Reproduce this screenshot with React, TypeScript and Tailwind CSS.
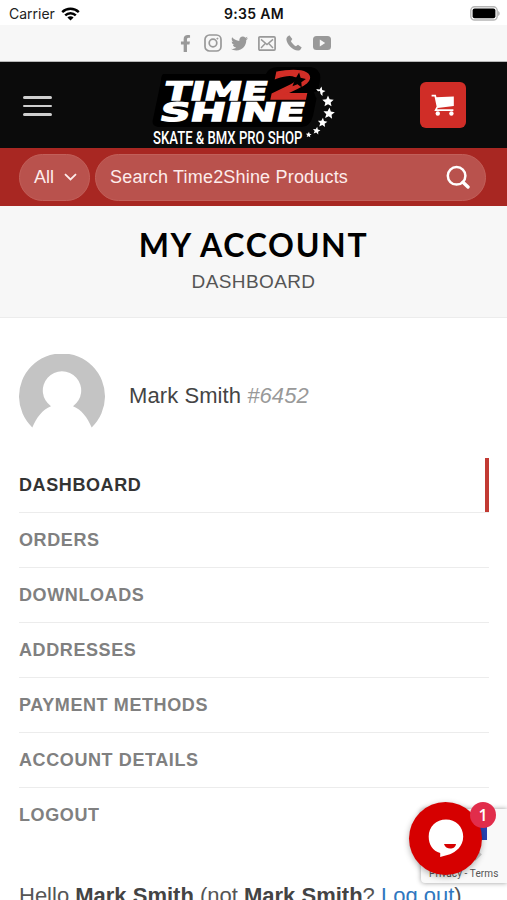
import React from 'react';
import { FaFacebookF, FaTwitter } from 'react-icons/fa';

const menuItems = ['Dashboard', 'Orders', 'Downloads', 'Addresses', 'Payment methods', 'Account details', 'Logout'];

const logoStars = [
    { x: 320.5, y: 91.5, r: 5, turn: 12 },
    { x: 328, y: 101.5, r: 6, turn: 0 },
    { x: 329, y: 113.5, r: 6, turn: 5 },
    { x: 322.5, y: 122.8, r: 5, turn: 5 },
    { x: 316.5, y: 130.8, r: 4, turn: 10 },
    { x: 308.7, y: 134.8, r: 3, turn: 5 },
];

const STAR = 'M0-1 .27-.37 .951-.309 .44.15 .588.809 0 .46-.588.809-.44.15-.951-.309-.27-.37Z';

const StatusBar = () => (
    <div className="flex h-[25px] items-center justify-between pl-[9px] pr-[7px] pt-0.5 font-['Inter','Liberation_Sans',sans-serif]">
        <div className="flex w-24 items-center gap-[6px] text-[14px] text-[#222]">
            <span>Carrier</span>
            <svg width="19" height="14" viewBox="0 0 19 14" fill="none" stroke="#000" strokeWidth="2.4">
                <path d="M1.2 5.2a11.8 11.8 0 0 1 16.6 0" />
                <path d="M4.2 8.4a7.5 7.5 0 0 1 10.6 0" />
                <path d="M9.5 13.6 6.4 10.5a4.4 4.4 0 0 1 6.2 0Z" fill="#000" stroke="none" />
            </svg>
        </div>
        <span className="pr-[1px] text-[14px] font-semibold tracking-[0.35px] text-[#111]">9:35 AM</span>
        <div className="flex w-24 justify-end">
            <svg width="31" height="15" viewBox="0 0 31 15">
                <rect x="1.8" y="0.8" width="26.4" height="13.2" rx="3.8" fill="#fff" stroke="#b5b5b5" strokeWidth="1.4" />
                <rect x="3.6" y="2.6" width="22.8" height="9.6" rx="2" />
                <path d="M29.2 5c1.9.8 1.9 4.2 0 5Z" fill="#aaa" />
            </svg>
        </div>
    </div>
);

const SocialBar = () => (
    <div className="flex h-[37px] items-center justify-center border-b border-[#b8b8b8] bg-[#f7f7f7] text-[#999]">
        <div className="flex w-[27.3px] justify-center"><FaFacebookF size={17} /></div>
        <div className="flex w-[27.3px] justify-center">
            <svg width="18" height="18" viewBox="0 0 18 18" fill="none" stroke="currentColor" strokeWidth="1.7">
                <rect x="1" y="1" width="16" height="16" rx="4.5" />
                <circle cx="9" cy="9" r="3.8" />
                <circle cx="13.4" cy="4.6" r="0.6" fill="currentColor" strokeWidth="0.8" />
            </svg>
        </div>
        <div className="flex w-[27.3px] justify-center"><FaTwitter size={17} /></div>
        <div className="flex w-[27.3px] justify-center">
            <svg width="18" height="15" viewBox="0 0 18 15" fill="none" stroke="currentColor" strokeWidth="1.7">
                <rect x="0.9" y="0.9" width="16.2" height="13.2" rx="1" />
                <path d="m3 3.4 6 5.2 6-5.2M3 12l4-4.2M15 12l-4-4.2" strokeWidth="1.4" />
            </svg>
        </div>
        <div className="flex w-[27.3px] justify-center">
            <svg width="16" height="16" viewBox="0 0 16 16" fill="currentColor">
                <path d="M3.4.3 1.3 1.7C-.9 4.3 1.2 8.7 4.3 11.7 7.4 14.8 11.9 16.9 14.3 14.7L15.7 12.6 12 9.7 9.9 11.2C8.3 10.6 5.5 7.8 4.9 6.2L6.3 4Z" />
            </svg>
        </div>
        <div className="flex w-[27.3px] justify-center">
            <svg width="18" height="14" viewBox="0 0 18 14">
                <rect width="18" height="14" rx="3.5" fill="currentColor" />
                <path d="M6.8 3.5v7l5.4-3.5Z" fill="#f7f7f7" />
            </svg>
        </div>
    </div>
);

const Logo = () => (
    <svg width="187" height="82" viewBox="150 66 187 82" className="overflow-visible">
        <path d="M163 74h103q3-7 12-7h33q11 2 9 14l-7 35q-3 11-11 11H158q-7-1-5-8l8-38q0-5 2-7Z" fill="#000" />
        <g fontFamily="'DejaVu Sans', sans-serif" fontWeight="700" fill="#fff" stroke="#fff" strokeWidth="1.3">
            <text transform="translate(163 100) skewX(-12)" fontSize="25.5" textLength="103" lengthAdjust="spacingAndGlyphs">TIME</text>
            <text transform="translate(158.5 121.3) skewX(-12)" fontSize="25.5" textLength="145" lengthAdjust="spacingAndGlyphs">SHINE</text>
            <text transform="translate(266.5 99.3) skewX(-12)" fontSize="38.5" textLength="44" lengthAdjust="spacingAndGlyphs" fill="#d12e27" stroke="#d12e27">2</text>
        </g>
        <path d={STAR} transform="translate(298 80.5) rotate(8) scale(8)" fill="#000" />
        <text x="153" y="144.3" fontFamily="Roboto, sans-serif" fontWeight="500" fontSize="17.5" fill="#fff" textLength="149.5" lengthAdjust="spacingAndGlyphs">SKATE &amp; BMX PRO SHOP</text>
        {logoStars.map(star => (
            <path key={star.y} d={STAR} fill="#fff" transform={`translate(${star.x} ${star.y}) rotate(${star.turn}) scale(${star.r})`} />
        ))}
        <path d="m314 92 6-1 1 6-5 1Z" fill="#0b0b0b" />
    </svg>
);

const Header = () => (
    <header className="flex h-[86px] items-center bg-[#0b0b0b] pl-[23px] pr-[41px]">
        <button aria-label="Menu" className="flex flex-1 flex-col gap-[6px] pt-0.5">
            <span className="h-[2.5px] w-[29px] rounded-full bg-[#cfcfcf]" />
            <span className="h-[2.5px] w-[29px] rounded-full bg-[#cfcfcf]" />
            <span className="h-[2.5px] w-[29px] rounded-full bg-[#cfcfcf]" />
        </button>
        <div className="mr-[83px] pt-1"><Logo /></div>
        <button aria-label="Cart" className="flex h-[46px] w-[46px] items-center justify-center rounded-md bg-[#d02d27]">
            <svg width="24" height="22" viewBox="0 0 24 22" fill="none" stroke="#fff">
                <path d="M4.800 3.200 22.800 2.400v9.600L6.600 14Z" fill="#fff" stroke="none" />
                <path d="M.6 1.7h3.6l2.3 11-1.8 3.500h17.700" strokeWidth="1.700" />
                <circle cx="6.800" cy="19.500" r="2.200" fill="#fff" stroke="none" />
                <circle cx="20.400" cy="19.500" r="2.200" fill="#fff" stroke="none" />
            </svg>
        </button>
    </header>
);

const SearchBar = () => (
    <div className="flex h-[58px] items-center gap-[5px] bg-[#a82722] pl-[19px] pr-[21px] text-[18px] text-[#fdeceb]">
        <div className="flex h-[47px] w-[71px] items-center justify-between rounded-full border border-[#c2605a] bg-[#b9524d] pl-[14px] pr-3">
            <span>All</span>
            <svg width="13" height="8" viewBox="0 0 13 8" fill="none" stroke="currentColor" strokeWidth="1.8">
                <path d="m1 1.2 5.5 5.2L12 1.2" />
            </svg>
        </div>
        <div className="flex h-[47px] flex-1 items-center justify-between rounded-full border border-[#c2605a] bg-[#b9524d] pl-[14px] pr-[15px]">
            <span className="tracking-[0.19px]">Search Time2Shine Products</span>
            <svg width="24" height="24" viewBox="0 0 24 24" fill="none" stroke="#fff">
                <circle cx="10.6" cy="10.8" r="8.8" strokeWidth="2.5" />
                <path d="m17 17.2 5 4.8" strokeWidth="3.4" strokeLinecap="round" />
            </svg>
        </div>
    </div>
);

const ChatWidget = () => (
    <>
        <div className="absolute left-[421px] top-[809px] h-[74px] w-[86px] rounded-l-sm bg-[#f9f9f9] shadow-[0_0_5px_#999]">
            <div className="absolute left-[58px] top-[18px] h-[13px] w-[8px] bg-[#2743b4]" />
            <div className="absolute left-[50px] top-[41px] h-[9px] w-[9px] rotate-45 bg-[#c9c9c9]" />
            <span className="absolute bottom-[3px] left-[8px] whitespace-nowrap font-['Roboto',sans-serif] text-[10px] leading-[13px] tracking-[0.1px] text-[#555]">Privacy - Terms</span>
        </div>
        <button aria-label="Chat" className="absolute left-[409px] top-[802px] h-[73px] w-[73px] rounded-full bg-[#d60000] shadow-[0_2px_6px_rgba(0,0,0,0.3)]">
            <svg width="73" height="73" viewBox="0 0 73 73">
                <path d="M37 17.5c9.7 0 17.2 7.3 17.2 17 0 10.5-7.8 15.3-13.2 17.8L31.2 55v-4c-7.5-1.7-11.5-8.7-11.5-16.5 0-9.7 7.6-17 17.3-17Z" fill="#fff" />
                <path d="M35 42h12c-.6 6-10.5 6.2-12 0Z" fill="#d60000" />
            </svg>
        </button>
        <span className="absolute left-[470px] top-[802px] flex h-[26px] w-[26px] items-center justify-center rounded-full bg-[#e12d4b] font-['Open_Sans',sans-serif] text-[16px] font-semibold text-white">1</span>
    </>
);

export default function App() {
    return (
        <div className="relative h-[900px] w-[507px] overflow-hidden bg-white font-['Liberation_Sans',sans-serif]">
            <StatusBar />
            <SocialBar />
            <Header />
            <SearchBar />
            <div className="flex h-[112px] flex-col items-center border-b border-[#ececec] bg-[#f7f7f7] pt-[18px]">
                <h1 className="font-['Lato',sans-serif] text-[32px] font-bold leading-[42px] tracking-[1.7px] text-black">MY ACCOUNT</h1>
                <p className="mt-[2px] text-[19px] leading-[27px] tracking-[0.4px] text-[#555]">DASHBOARD</p>
            </div>
            <main className="pl-[19px] pr-[18px] pt-[36px]">
                <div className="flex h-[86px] items-center gap-6">
                    <svg width="86" height="86" viewBox="0 0 86 86">
                        <path d="M13.3 73.5A43 43 0 1 1 72.7 73.5C68.5 63.5 62.5 55.6 54 52.2A19.2 19.2 0 1 0 32 52.2C23.5 55.6 17.5 63.5 13.3 73.5Z" fill="#c4c4c4" />
                    </svg>
                    <p className="-mt-[3px] text-[22px] tracking-[0.08px] text-[#444]">Mark Smith <em className="text-[#999]">#6452</em></p>
                </div>
                <nav className="mt-[17px]">
                    {menuItems.map((item, index) => (
                        <div key={item} className={`relative flex h-[55px] items-center text-[18px] font-bold uppercase tracking-[0.6px] ${index === 0 ? 'pt-[2px] text-[#333]' : 'border-t border-[#ececec] text-[#808080]'}`}>
                            {item}
                            {index === 0 && <span className="absolute right-0 top-[1px] h-[54px] w-[4px] bg-[#c23a33]" />}
                        </div>
                    ))}
                </nav>
                <p className="mt-[39px] whitespace-nowrap text-[22px] leading-[30px] text-[#555]">
                    Hello <b className="text-[#444]">Mark Smith</b> (not <b className="text-[#444]">Mark Smith</b>? <a className="text-[#2f77c0]">Log out</a>)
                </p>
            </main>
            <ChatWidget />
        </div>
    );
}
